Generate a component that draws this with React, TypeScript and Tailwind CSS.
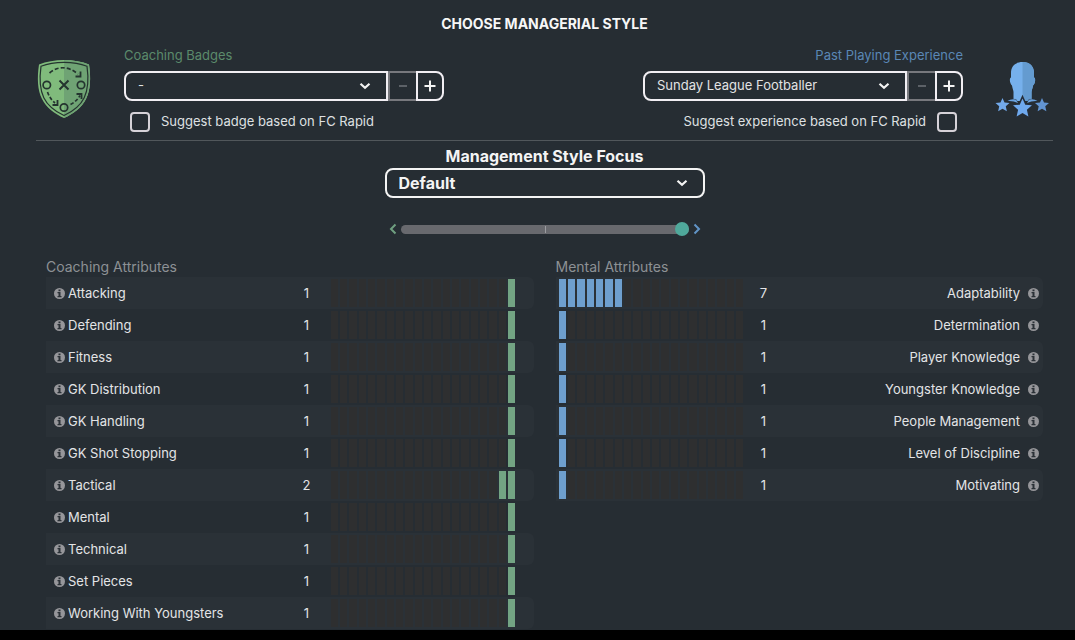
import { useState } from "react";

type Attribute = { name: string; value: number };

const coaching: Attribute[] = [
  { name: "Attacking", value: 1 },
  { name: "Defending", value: 1 },
  { name: "Fitness", value: 1 },
  { name: "GK Distribution", value: 1 },
  { name: "GK Handling", value: 1 },
  { name: "GK Shot Stopping", value: 1 },
  { name: "Tactical", value: 2 },
  { name: "Mental", value: 1 },
  { name: "Technical", value: 1 },
  { name: "Set Pieces", value: 1 },
  { name: "Working With Youngsters", value: 1 },
];

const mental: Attribute[] = [
  { name: "Adaptability", value: 7 },
  { name: "Determination", value: 1 },
  { name: "Player Knowledge", value: 1 },
  { name: "Youngster Knowledge", value: 1 },
  { name: "People Management", value: 1 },
  { name: "Level of Discipline", value: 1 },
  { name: "Motivating", value: 1 },
];

const CELLS = Array.from({ length: 20 }, (_, i) => i);

function BadgeIcon() {
  return (
    <svg viewBox="0 0 54 60" className="h-[60px] w-[54px] shrink-0" aria-hidden="true">
      <path d="M27 1C36 1 45 2.500 52 5.500C54 19 53.500 31 49 40C45 48.500 36 55 27 59C18 55 9 48.500 5 40C.5 31 0 19 2 5.500C9 2.500 18 1 27 1Z" fill="#80bb7c" />
      <path d="M27 1C36 1 45 2.500 52 5.500C54 19 53.500 31 49 40C45 48.500 36 55 27 59Z" fill="#6fa374" />
      <path d="M27 3.300C35 3.300 43.500 4.600 50 7.200C51.600 19 51.200 30.500 47.200 38.700C43.300 46.700 35 52.800 27 56.500C19 52.800 10.700 46.700 6.800 38.700C2.800 30.500 2.400 19 4 7.200C10.500 4.600 19 3.300 27 3.300Z" fill="none" stroke="#24342f" strokeWidth="1.200" />
      <g fill="none" stroke="#24342f" strokeWidth="1.700">
        <circle cx="9.800" cy="26" r="3.700" />
        <circle cx="44" cy="26" r="3.700" />
        <circle cx="27" cy="48.500" r="3.700" />
        <path d="M22.500 21.500L31.500 30.500M31.500 21.500L22.500 30.500" strokeWidth="2" />
        <path d="M12.500 14Q26 3 41 15" strokeDasharray="4 2.200" />
        <path d="M43.500 12.500V17.500H38.500" strokeWidth="1.800" />
        <path d="M10.500 33Q13 40 18 44" strokeDasharray="3.500 2" />
        <path d="M20.500 41V46H15.500" strokeWidth="1.800" />
        <path d="M33.500 45.500Q40 42 43 36.500" strokeDasharray="3.500 2" />
        <path d="M39.500 35H44.500V40" strokeWidth="1.800" />
      </g>
    </svg>
  );
}

function PlayerIcon() {
  const star = "M0-9L2.600-3.200L9-2.600L4.200 1.700L5.600 8L0 4.700L-5.600 8L-4.200 1.700L-9-2.600L-2.600-3.200Z";
  return (
    <svg viewBox="0 0 54 58" className="h-[58px] w-[54px] shrink-0" aria-hidden="true">
      <path d="M27.500 1C20 1 16 5.500 16 12V16.500C14 17 14.800 23 17 24.500C17.400 27.500 18.500 29.500 18.500 31V40H36.500V31C36.500 29.500 37.600 27.500 38 24.500C40.200 23 41 17 39 16.500V12C39 5.500 35 1 27.500 1Z" fill="#76b0ec" />
      <path d="M27.500 1C35 1 39 5.500 39 12V16.500C41 17 40.200 23 38 24.500C37.600 27.500 36.500 29.500 36.500 31V40H27.500Z" fill="#649bd0" />
      <path d="M12.500 40Q16 37.500 21 38.500L23 42Q18 39.500 12.500 40ZM42.500 40Q39 37.500 34 38.500L32 42Q37 39.500 42.500 40Z" fill="#6aa2df" stroke="#252d37" strokeWidth="1" paintOrder="stroke" />
      <path d={star} transform="translate(27.500 47) scale(1.050)" fill="#6fa9ee" stroke="#252d37" strokeWidth="3" paintOrder="stroke" />
      <path d={star} transform="translate(7.500 44) scale(.78)" fill="#72a9ea" />
      <path d={star} transform="translate(47 44) scale(.78)" fill="#6294d2" />
    </svg>
  );
}

function InfoIcon() {
  return (
    <svg viewBox="0 0 11 11" className="size-[11px] shrink-0" aria-hidden="true">
      <circle cx="5.500" cy="5.500" r="5.500" fill="#96969a" />
      <path d="M4.500 1.500H6.500V3.300H4.500ZM3.500 4H6.500V8H7.500V9.300H3.500V8H4.500V5.300H3.500Z" fill="#2b3137" />
    </svg>
  );
}

function Chevron() {
  return (
    <svg viewBox="0 0 12 8" className="pointer-events-none absolute right-[17px] top-1/2 h-2 w-3 -translate-y-1/2" aria-hidden="true">
      <path d="M1.500 1.800L6 5.800L10.500 1.800" fill="none" stroke="#f4f4f4" strokeWidth="2.200" />
    </svg>
  );
}

function Stepper({ id, options }: { id: string; options: string[] }) {
  return (
    <div className="mt-[5px] flex h-[30px] w-80">
      <div className="relative min-w-0 flex-1">
        <select
          id={id}
          className="h-full w-full appearance-none rounded-l-lg border-2 border-[#f1eef3] bg-transparent pl-3 pr-8 text-[13px] text-[#e2e3e4]"
        >
          {options.map((o) => (
            <option key={o}>{o}</option>
          ))}
        </select>
        <Chevron />
      </div>
      <button disabled aria-label="Previous" className="flex w-7 items-center justify-center border-2 border-r-0 border-[#77787d]">
        <span className="h-0.5 w-2 bg-[#5c6167]" />
      </button>
      <button aria-label="Next" className="flex w-7 items-center justify-center rounded-r-lg border-2 border-[#f1eef3]">
        <svg viewBox="0 0 12 12" className="size-3" aria-hidden="true">
          <path d="M6 .5V11.500M.5 6H11.500" stroke="#f4f4f4" strokeWidth="2" />
        </svg>
      </button>
    </div>
  );
}

const checkboxClass =
  "size-5 shrink-0 appearance-none rounded-[4px] border-2 border-[#d6d2d8] checked:bg-[#4fa89b]";

function Bars({ value, side }: { value: number; side: "left" | "right" }) {
  return (
    <div className="grid h-7 w-[185px] shrink-0 grid-cols-20 gap-0.5">
      {CELLS.map((i) => {
        const on = side === "left" ? i >= 20 - value : i < value;
        const color = on ? (side === "left" ? "bg-[#73a483]" : "bg-[#6e9fce]") : "bg-[#2e2f30]";
        return <span key={i} className={color} />;
      })}
    </div>
  );
}

const rowClass = "flex h-8 items-center rounded-r-md text-[13px] text-[#e3e4e6] odd:bg-[#2a3137]";

export default function App() {
  const [balance, setBalance] = useState(100);
  return (
    <div className="min-h-screen bg-black font-['Inter','Liberation_Sans',sans-serif]">
      <main className="bg-[#262d33] pb-px pl-9 pr-[22px] pt-3">
        <h1 className="text-center text-sm font-bold leading-6 text-[#f7f7f7]">CHOOSE MANAGERIAL STYLE</h1>

        <section className="mt-2 flex justify-between border-b border-[#51575b] pb-2">
          <div className="flex gap-8">
            <div className="pt-[15px] pl-px pr-px">
              <BadgeIcon />
            </div>
            <div>
              <label htmlFor="badge" className="block text-[13px] leading-[22px] text-[#5b8a6b]">Coaching Badges</label>
              <Stepper id="badge" options={["-"]} />
              <label className="mt-[11px] flex h-5 items-center gap-[11px] pl-1.5 text-[13px] text-[#dfe0e2]">
                <input type="checkbox" className={checkboxClass} />
                Suggest badge based on FC Rapid
              </label>
            </div>
          </div>
          <div className="flex gap-8">
            <div className="text-right">
              <label htmlFor="experience" className="block text-[13px] leading-[22px] text-[#5a87b5]">Past Playing Experience</label>
              <Stepper id="experience" options={["Sunday League Footballer"]} />
              <label className="mt-[11px] flex h-5 items-center justify-end gap-[11px] pr-1.5 text-[13px] text-[#dfe0e2]">
                Suggest experience based on FC Rapid
                <input type="checkbox" className={checkboxClass} />
              </label>
            </div>
            <div className="pr-1 pt-[17px]">
              <PlayerIcon />
            </div>
          </div>
        </section>

        <section className="mx-auto w-80 pt-[5px]">
          <label htmlFor="focus" className="block text-center text-base font-bold leading-5 text-[#f4f4f4]">Management Style Focus</label>
          <div className="relative mt-0.5 h-[30px]">
            <select
              id="focus"
              className="h-full w-full appearance-none rounded-lg border-2 border-[#f4f4f4] bg-transparent pl-3 pr-8 text-base font-bold leading-5 text-[#f4f4f4]"
            >
              <option>Default</option>
            </select>
            <Chevron />
          </div>
          <div className="mt-[21px] flex h-5 items-center justify-between px-1">
            <button aria-label="More coaching">
              <svg viewBox="0 0 8 12" className="h-3 w-2" aria-hidden="true">
                <path d="M6.500 1.500L2 6L6.500 10.500" fill="none" stroke="#6f9f80" strokeWidth="2" />
              </svg>
            </button>
            <div className="relative flex w-72 items-center">
              <input
                type="range"
                aria-label="Coaching and mental balance"
                min={0}
                max={100}
                value={balance}
                onChange={(e) => setBalance(Number(e.target.value))}
                className="h-[9px] w-full appearance-none rounded-full bg-[#68696e] [&::-webkit-slider-thumb]:size-[14px] [&::-webkit-slider-thumb]:appearance-none [&::-webkit-slider-thumb]:rounded-full [&::-webkit-slider-thumb]:bg-[#4fa89b]"
              />
              <span className="pointer-events-none absolute left-1/2 h-[7px] w-px bg-[#9b9ca0]" />
            </div>
            <button aria-label="More mental">
              <svg viewBox="0 0 8 12" className="h-3 w-2" aria-hidden="true">
                <path d="M1.500 1.500L6 6L1.500 10.500" fill="none" stroke="#6194c7" strokeWidth="2" />
              </svg>
            </button>
          </div>
        </section>

        <div className="mt-[18px] grid grid-cols-2 gap-[22px] px-[10px]">
          <section>
            <h2 className="text-sm leading-5 text-[#8d9195]">Coaching Attributes</h2>
            <ul>
              {coaching.map((a) => (
                <li key={a.name} className={`${rowClass} pl-2 pr-[18px]`}>
                  <InfoIcon />
                  <span className="ml-[3px] flex-1 pt-px">{a.name}</span>
                  <span className="w-12 pt-px text-center">{a.value}</span>
                  <Bars value={a.value} side="left" />
                </li>
              ))}
            </ul>
          </section>
          <section>
            <h2 className="text-sm leading-5 text-[#8d9195]">Mental Attributes</h2>
            <ul>
              {mental.map((a) => (
                <li key={a.name} className={`${rowClass} pl-[3px] pr-1`}>
                  <Bars value={a.value} side="right" />
                  <span className="w-10 pt-px text-center">{a.value}</span>
                  <span className="mr-2 flex-1 pt-px text-right">{a.name}</span>
                  <InfoIcon />
                </li>
              ))}
            </ul>
          </section>
        </div>
      </main>
    </div>
  );
}
